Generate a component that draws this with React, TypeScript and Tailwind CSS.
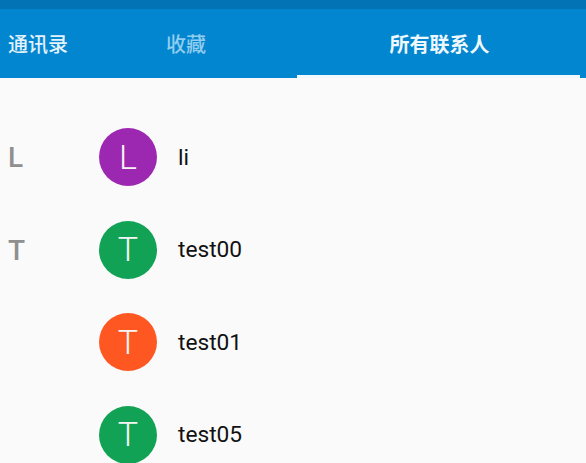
const contacts = [
  { letter: "L", name: "li", color: "bg-[#9c27b0]" },
  { letter: "T", name: "test00", color: "bg-[#12a255]" },
  { letter: "T", name: "test01", color: "bg-[#ff5722]" },
  { letter: "T", name: "test05", color: "bg-[#12a255]" },
];

export default function App() {
  return (
    <div className="flex h-[463px] w-[586px] flex-col overflow-hidden bg-[#fafafa] font-['Roboto','Noto_Sans_CJK_SC',sans-serif]">
      <div className="h-[9px] shrink-0 bg-[#0274b5]" />
      <div className="flex h-[69px] shrink-0 bg-[#0286d0] text-[20px] font-medium leading-none">
        <div className="flex w-[297px] items-center pt-[2px]">
          <span className="w-[166px] pl-[8px] text-[#e3f2fb]">通讯录</span>
          <span className="text-[#93cdee]">收藏</span>
        </div>
        <div className="flex w-[283px] flex-col">
          <div className="flex flex-1 items-center justify-center pl-[2px] pt-[5px] font-bold text-[#eef8fd]">所有联系人</div>
          <div className="h-[3px] bg-[#eef8fd]" />
        </div>
      </div>
      <div className="flex flex-col gap-[34.5px] pt-[50px]">
        {contacts.map((c, i) => (
          <div key={c.name} className="flex h-[58px] shrink-0 items-center">
            <div className="w-[99px] pl-[8px] pt-[2px] text-[28px] font-medium text-[#8f8f8f]">
              {i < 2 ? c.letter : ""}
            </div>
            <div className={`flex h-[58px] w-[58px] items-center justify-center rounded-full text-[34px] font-light text-[#f5f5f5] ${c.color}`}>
              {c.letter}
            </div>
            <div className="pl-[21px] pt-[2px] text-[22.7px] text-[#111111]">{c.name}</div>
          </div>
        ))}
      </div>
    </div>
  );
}
